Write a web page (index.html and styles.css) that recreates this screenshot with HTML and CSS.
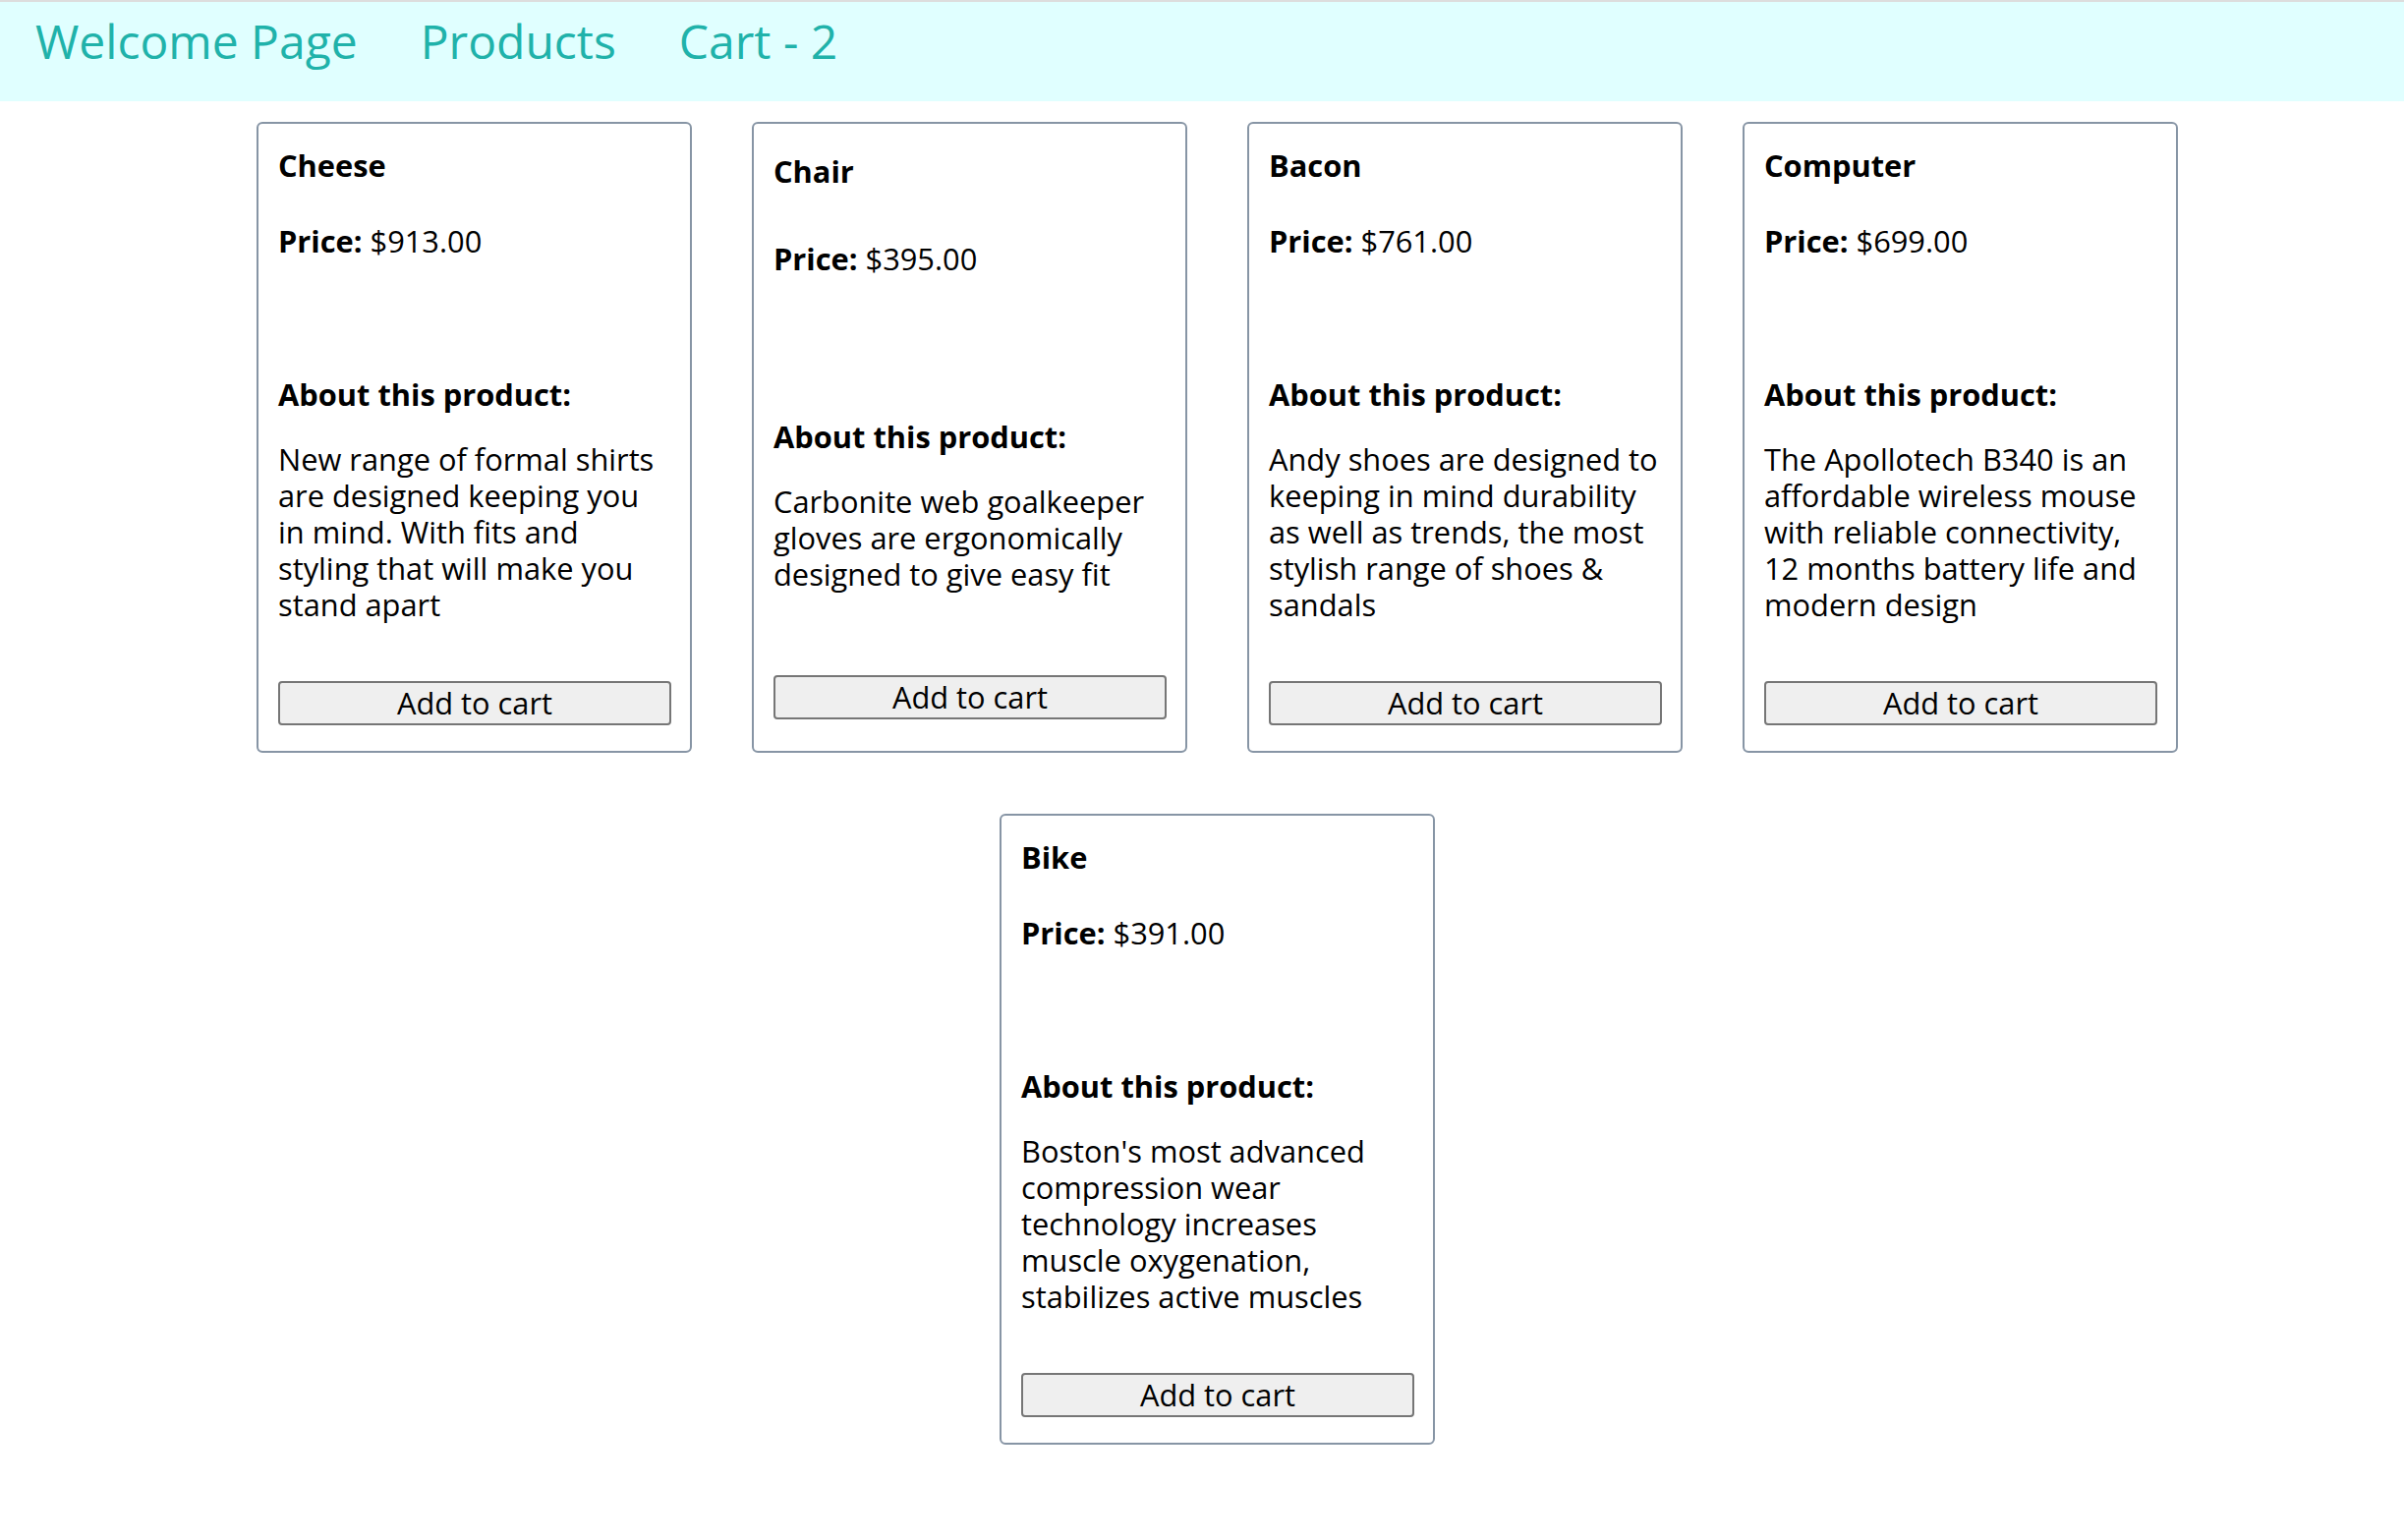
FILE: index.html
```html
<!DOCTYPE html>
<html lang="en">
<head>
<meta charset="utf-8">
<title>Products</title>
<link rel="stylesheet" href="styles.css">
</head>
<body>
<header class="topbar">
  <nav class="nav">
    <a class="nav-link" href="#">Welcome Page</a>
    <a class="nav-link" href="#">Products</a>
    <a class="nav-link" href="#">Cart - 2</a>
  </nav>
</header>
<main class="products">
  <div class="card">
    <h3 class="card-title">Cheese</h3>
    <p class="card-price"><b>Price:</b> $913.00</p>
    <div class="card-image"></div>
    <div class="card-about">
      <h4 class="about-title">About this product:</h4>
      <p class="about-text">New range of formal shirts are designed keeping you in mind. With fits and styling that will make you stand apart</p>
    </div>
    <div class="card-spacer"></div>
    <button class="add-btn">Add to cart</button>
  </div>
  <div class="card">
    <h3 class="card-title">Chair</h3>
    <p class="card-price"><b>Price:</b> $395.00</p>
    <div class="card-image"></div>
    <div class="card-about">
      <h4 class="about-title">About this product:</h4>
      <p class="about-text">Carbonite web goalkeeper gloves are ergonomically designed to give easy fit</p>
    </div>
    <div class="card-spacer"></div>
    <button class="add-btn">Add to cart</button>
  </div>
  <div class="card">
    <h3 class="card-title">Bacon</h3>
    <p class="card-price"><b>Price:</b> $761.00</p>
    <div class="card-image"></div>
    <div class="card-about">
      <h4 class="about-title">About this product:</h4>
      <p class="about-text">Andy shoes are designed to keeping in mind durability as well as trends, the most stylish range of shoes &amp; sandals</p>
    </div>
    <div class="card-spacer"></div>
    <button class="add-btn">Add to cart</button>
  </div>
  <div class="card">
    <h3 class="card-title">Computer</h3>
    <p class="card-price"><b>Price:</b> $699.00</p>
    <div class="card-image"></div>
    <div class="card-about">
      <h4 class="about-title">About this product:</h4>
      <p class="about-text">The Apollotech B340 is an affordable wireless mouse with reliable connectivity, 12 months battery life and modern design</p>
    </div>
    <div class="card-spacer"></div>
    <button class="add-btn">Add to cart</button>
  </div>
  <div class="card">
    <h3 class="card-title">Bike</h3>
    <p class="card-price"><b>Price:</b> $391.00</p>
    <div class="card-image"></div>
    <div class="card-about">
      <h4 class="about-title">About this product:</h4>
      <p class="about-text">Boston's most advanced compression wear technology increases muscle oxygenation, stabilizes active muscles</p>
    </div>
    <div class="card-spacer"></div>
    <button class="add-btn">Add to cart</button>
  </div>
</main>
</body>
</html>
```
FILE: styles.css
```css
html, body {
  margin: 0;
  padding: 0;
  background: #ffffff;
}

body {
  font-family: "Open Sans", "Noto Sans", sans-serif;
  color: #000000;
}

.topbar {
  height: 101px;
  border-top: 2px solid #dddddd;
  background: #e0ffff;
}

.nav {
  display: flex;
  align-items: flex-start;
  gap: 64px;
  padding: 12px 0 0 36px;
}

.nav-link {
  font-size: 48px;
  line-height: 55px;
  color: #20b2aa;
  text-decoration: none;
}

.products {
  display: flex;
  flex-wrap: wrap;
  justify-content: center;
  gap: 62px 61px;
  padding: 21px 0 40px 31px;
}

.card {
  display: flex;
  flex-direction: column;
  justify-content: space-around;
  box-sizing: border-box;
  width: 443px;
  padding: 24px 20px 26px 20px;
  border: 2px solid #8795a5;
  border-radius: 6px;
  font-size: 30.8px;
  line-height: 36.8px;
}

.card-title,
.card-price,
.about-title,
.about-text {
  margin: 0;
  font-size: 30.8px;
  line-height: 36.8px;
}

.card-title,
.about-title {
  font-weight: 700;
}

.card-price {
  margin-top: 40px;
}

.card-price b {
  font-weight: 700;
}

.card-image {
  height: 0;
  margin-top: 60px;
}

.card-about {
  margin-top: 59px;
}

.about-text {
  margin-top: 30px;
}

.card-spacer {
  height: 0;
  margin-top: 30px;
}

.add-btn {
  margin-top: 29.6px;
  width: 400px;
  height: 45px;
  padding: 0;
  box-sizing: border-box;
  border: 2px solid #767676;
  border-radius: 4px;
  background: #efefef;
  font-family: "Open Sans", "Noto Sans", sans-serif;
  font-size: 30.8px;
  line-height: 36px;
  color: #000000;
}
```
